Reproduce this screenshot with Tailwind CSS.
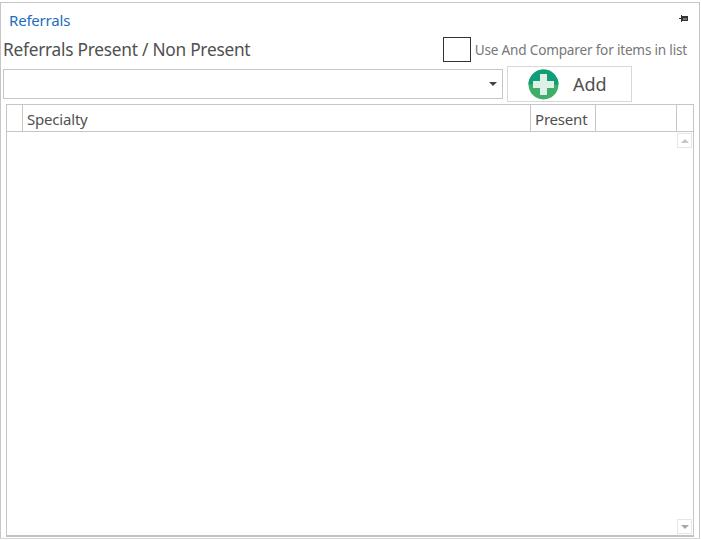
<!DOCTYPE html>
<html lang="en">
<head>
  <meta charset="UTF-8" />
  <title>Referrals</title>
  <script src="https://cdn.jsdelivr.net/npm/@tailwindcss/browser@4"></script>
</head>
<body class="bg-white w-[701px] h-[540px] overflow-hidden font-['Noto_Sans','Open_Sans',sans-serif]">
  <div class="w-[700px] h-[537px] mt-[2px] border border-[#c6c6c6] border-b-[#d8d8d8] flex flex-col">
    <!-- Title -->
    <div class="h-[34px] flex items-start justify-between pl-[8px] pr-[11px]">
      <span class="text-[15px] leading-[20px] mt-[7px] text-[#1e6cc0] tracking-[-0.2px]">Referrals</span>
      <svg class="mt-[12px]" width="9" height="8" viewBox="0 0 9 8">
        <path d="M0 3h2v1H0zM2 0h1v7H2z" fill="#333"/>
        <path d="M3 1h6v5H3z" fill="#333"/>
        <path d="M4 3h4v2H4z" fill="#777"/>
      </svg>
    </div>
    <!-- Options row -->
    <div class="h-[26px] flex items-center justify-between pl-[2px] pr-[12px]">
      <span class="text-[17.3px] leading-[24px] text-[#505050] tracking-[-0.25px]">Referrals Present / Non Present</span>
      <div class="flex items-center gap-[4px]">
        <div class="w-[28px] h-[25px] -mt-[2px] border border-[#333] bg-white"></div>
        <span class="text-[13.6px] leading-[18px] text-[#777] tracking-[-0.2px]">Use And Comparer for items in list</span>
      </div>
    </div>
    <!-- Combo + Add -->
    <div class="h-[38px] flex items-center pl-[2px] mt-[2px]">
      <div class="w-[500px] h-[30px] border border-[#c6c6c6] flex items-center justify-end pr-[5px]">
        <div class="w-0 h-0 border-x-[4px] border-x-transparent border-t-[4px] border-t-[#444]"></div>
      </div>
      <button class="ml-[4px] w-[125px] h-[36px] border border-[#d8d8d8] flex items-center pl-[20px]">
        <svg width="31" height="31" viewBox="0 0 31 31">
          <circle cx="15.5" cy="15.5" r="15" fill="#3fae68"/>
          <path d="M.5 15.5a15 15 0 0 1 30 0z" fill="#0f9f78"/>
          <path d="M12 5h7v7h7v7h-7v7h-7v-7H5v-7h7z" fill="#dff1e6"/>
        </svg>
        <span class="ml-[14px] text-[18px] leading-[24px] text-[#505050]">Add</span>
      </button>
    </div>
    <!-- Grid -->
    <div class="ml-[5px] w-[688px] h-[433px] mt-[1px] border border-[#c6c6c6] border-b-2 border-b-[#c2c2c2] flex flex-col">
      <div class="h-[27px] flex border-b border-[#c6c6c6] text-[15px] text-[#505050] leading-[28px] tracking-[-0.2px]">
        <div class="w-[16px] border-r border-[#c6c6c6]"></div>
        <div class="w-[508px] border-r border-[#c6c6c6] pl-[4px]">Specialty</div>
        <div class="w-[65px] border-r border-[#c6c6c6] pl-[4px]">Present</div>
        <div class="w-[81px] border-r border-[#c6c6c6]"></div>
        <div class="flex-1"></div>
      </div>
      <div class="flex-1 flex flex-col justify-between items-end pr-[1px] pt-[1px] pb-[1px]">
        <div class="w-[15px] h-[15px] border border-[#e6e6e6] flex items-center justify-center">
          <div class="w-0 h-0 border-x-[4px] border-x-transparent border-b-[4px] border-b-[#c4c4c4]"></div>
        </div>
        <div class="w-[15px] h-[15px] border border-[#e6e6e6] flex items-center justify-center">
          <div class="w-0 h-0 border-x-[4px] border-x-transparent border-t-[4px] border-t-[#a8a8a8]"></div>
        </div>
      </div>
    </div>
  </div>
</body>
</html>
